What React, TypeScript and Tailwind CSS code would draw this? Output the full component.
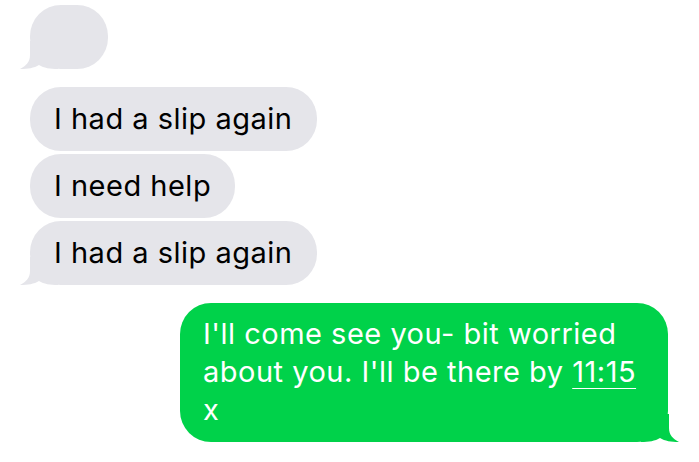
import React from "react";

function Tail({ side, color }: { side: "left" | "right"; color: string }) {
    return (
        <svg
            className={side === "left" ? "absolute bottom-0 left-[-10px]" : "absolute bottom-0 right-[-11px] -scale-x-100"}
            width="40"
            height="28"
            viewBox="0 0 40 28"
        >
            <path
                d="M10 0 L10 14 C10 21 6 25 0 28 C8 28 14 27 19 24 C24 27 30 28 38 28 L38 0 Z"
                fill={color}
            />
        </svg>
    );
}

function Incoming({ text, tail, w }: { text?: string; tail?: boolean; w?: string }) {
    return (
        <div className={`relative self-start bg-[#e5e5ea] rounded-[31px] h-[64px] flex items-center px-[24px] text-black ${w ?? ""}`}>
            {tail && <Tail side="left" color="#e5e5ea" />}
            {text && <span className="relative">{text}</span>}
        </div>
    );
}

export default function App() {
    return (
        <div
            className="w-[699px] h-[462px] bg-white overflow-hidden flex flex-col px-[30px] pt-[5px] text-[29px] leading-[38px] tracking-[0.5px]"
            style={{ fontFamily: "Inter, 'Liberation Sans', sans-serif" }}
        >
            <Incoming tail w="w-[78px]" />

            <div className="flex flex-col gap-[3px] mt-[18px]">
                <Incoming text="I had a slip again" />
                <Incoming text="I need help" />
                <Incoming text="I had a slip again" tail />
            </div>

            <div className="relative self-end mr-[1px] mt-[18px] w-[488px] bg-[#00d24a] rounded-[31px] pl-[23px] pr-[16px] pt-[12px] pb-[13px] text-white">
                <Tail side="right" color="#00d24a" />
                <p className="relative">
                    I'll come see you- bit worried
                    <br />
                    about you. I'll be there by{" "}
                    <span className="underline decoration-1 underline-offset-[6px]">11:15</span>
                    <br />x
                </p>
            </div>
        </div>
    );
}
